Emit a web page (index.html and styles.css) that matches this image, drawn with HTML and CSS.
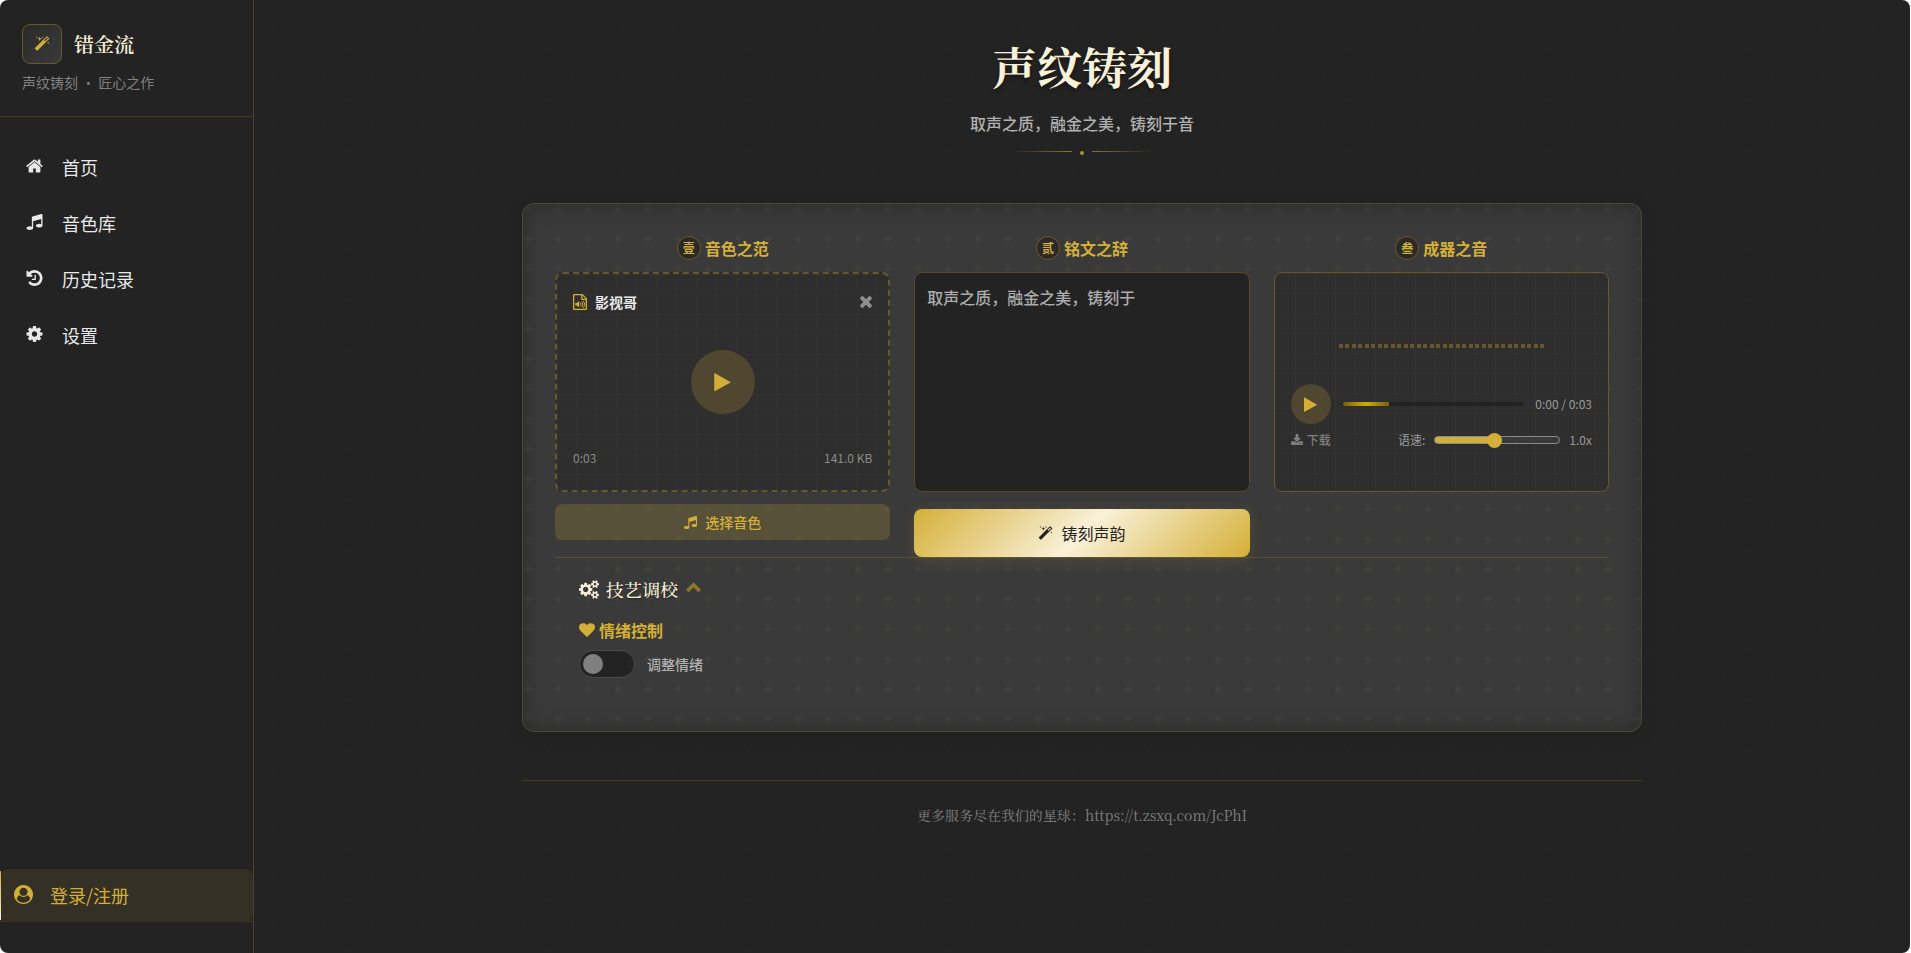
FILE: index.html
```html
<!DOCTYPE html>
<html lang="zh-CN">
<head>
<meta charset="utf-8">
<title>错金流 · 声纹铸刻</title>
<link rel="stylesheet" href="styles.css">
</head>
<body>
<svg class="sprite" aria-hidden="true">
  <symbol id="i-wand" viewBox="0 0 1664 1792"><path d="M1190 581l293-293-107-107-293 293zM1637 288q0 27-18 45L333 1619q-18 18-45 18t-45-18L45 1421q-18-18-18-45t18-45L1331 45q18-18 45-18t45 18l198 198q18 18 18 45zM286 98l98 30-98 30-30 98-30-98-98-30 98-30 30-98zM636 260l196 60-196 60-60 196-60-196-196-60 196-60 60-196zM1566 738l98 30-98 30-30 98-30-98-98-30 98-30 30-98zM926 98l98 30-98 30-30 98-30-98-98-30 98-30 30-98z"/></symbol>
  <symbol id="i-home" viewBox="0 0 1664 1536"><path d="M1408 864v480q0 26-19 45t-45 19H960v-384H704v384H320q-26 0-45-19t-19-45V864q0-1 .5-3t.5-3l575-474 575 474q1 2 1 6zm223-69l-62 74q-8 9-21 11h-3q-13 0-21-7L832 296 140 873q-12 8-24 7-13-2-21-11l-62-74q-8-10-7-23.500t11-21.500L756 151q32-26 76-26t76 26l244 204V160q0-14 9-23t23-9h192q14 0 23 9t9 23v408l219 182q10 8 11 21.500t-7 23.500z"/></symbol>
  <symbol id="i-music" viewBox="0 0 1536 1536"><path d="M1536 96v1120q0 50-34 89t-86 60.500-103.500 32-96.500 10.500-96.500-10.500-103.500-32-86-60.500-34-89 34-89 86-60.500 103.500-32 96.500-10.500q105 0 192 39V527L640 764v709q0 50-34 89t-86 60.500-103.500 32T320 1665t-96.500-10.500-103.500-32-86-60.500T0 1473t34-89 86-60.500 103.500-32T320 1281q105 0 192 39V352q0-31 19-56.500t49-35.500L1412 4q12-4 28-4 40 0 68 28t28 68z" transform="scale(1 .92)"/></symbol>
  <symbol id="i-history" viewBox="0 0 1536 1536"><path d="M1536 768q0 156-61 298t-164 245-245 164-298 61q-172 0-327-72.500T177 1259q-7-10-6.500-22.500t8.500-20.500l137-138q10-9 25-9 16 2 23 12 73 95 179 147t225 52q104 0 198.500-40.500T1130 1130t109.500-163.500T1280 768t-40.500-198.500T1130 406 966.500 296.500 768 256q-98 0-188 35.500T420 393l137 138q31 30 14 69-17 40-59 40H64q-26 0-45-19T0 576V128q0-42 40-59 39-17 69 14l130 129Q346 111 483.500 55.500T768 0q156 0 298 61t245 164 164 245 61 298zM896 480v448q0 14-9 23t-23 9H544q-14 0-23-9t-9-23v-64q0-14 9-23t23-9h224V480q0-14 9-23t23-9h64q14 0 23 9t9 23z"/></symbol>
  <symbol id="i-cog" viewBox="0 0 1536 1536"><path d="M1024 768q0-106-75-181t-181-75-181 75-75 181 75 181 181 75 181-75 75-181zm512-109v222q0 12-8 23t-20 13l-185 28q-19 54-39 91 35 50 107 138 10 12 10 25t-9 23q-27 37-99 108t-94 71q-12 0-26-9l-138-108q-44 23-91 38-16 136-29 186-7 28-36 28H657q-14 0-24.500-8.500T621 1506l-28-184q-49-16-90-37l-141 107q-10 9-25 9-14 0-25-11-126-114-165-168-7-10-7-23 0-12 8-23 15-21 51-66.500t54-70.500q-27-50-41-99L29 913q-13-2-21-12.500T0 877V655q0-12 8-23t19-13l186-28q14-46 39-92-40-57-107-138-10-12-10-24 0-10 9-23 26-36 98.500-107.500T337 135q13 0 26 10l138 107q44-23 91-38 16-136 29-186 7-28 36-28h222q14 0 24.500 8.500T915 30l28 184q49 16 90 37l142-107q9-9 24-9 13 0 25 10 129 119 165 170 7 8 7 22 0 12-8 23-15 21-51 66.500t-54 70.500q26 50 41 98l183 28q13 2 21 12.500t8 23.500z"/></symbol>
  <symbol id="i-user" viewBox="0 0 1792 1792"><path fill-rule="evenodd" d="M1523 1339q-22-155-87.500-257.500t-184.500-118.500q-67 74-159.500 115.500t-195.500 41.500-195.500-41.500-159.500-115.500q-119 16-184.500 118.500t-87.500 257.500q106 150 271 237.500t356 87.500 356-87.500 271-237.500zm-243-699q0-159-112.500-271.500t-271.500-112.500-271.500 112.500-112.500 271.500 112.500 271.500 271.500 112.500 271.500-112.500 112.500-271.500zm512 256q0 182-71 347.500t-190.500 286-285.500 191.500-349 71q-182 0-348-71t-286-191-191-286-71-348 71-348 191-286 286-191 348-71 348 71 286 191 191 286 71 348z"/></symbol>
  <symbol id="i-play" viewBox="0 0 1408 1536"><path d="M1384 809L56 1547q-23 13-39.500 3T0 1520V48q0-20 16.500-30T56 21l1328 738q23 13 23 25t-23 25z"/></symbol>
  <symbol id="i-times" viewBox="110 366 1188 1188"><path d="M1298 1322q0 40-28 68l-136 136q-28 28-68 28t-68-28l-294-294-294 294q-28 28-68 28t-68-28l-136-136q-28-28-28-68t28-68l294-294-294-294q-28-28-28-68t28-68l136-136q28-28 68-28t68 28l294 294 294-294q28-28 68-28t68 28l136 136q28 28 28 68t-28 68l-294 294 294 294q28 28 28 68z"/></symbol>
  <symbol id="i-file" viewBox="0 0 14 16"><path fill-rule="evenodd" d="M1 0h8.500L14 4.500V15a1 1 0 0 1-1 1H1a1 1 0 0 1-1-1V1a1 1 0 0 1 1-1zm.3 1.300v13.400h11.400V6H9a.8.800 0 0 1-.8-.8V1.300zm8.200.2v3.200h3.200z"/><path d="M2.300 9h1.500L6.200 7v6.400L3.800 11.500H2.300z"/><path class="line" d="M7.300 8.800q1.400 1.500 0 3M8.700 7.600q2.700 2.700 0 5.400M10 6.800q3.400 3.500 0 7"/></symbol>
  <symbol id="i-download" viewBox="0 0 1664 1536"><path d="M1280 1216q0-26-19-45t-45-19-45 19-19 45 19 45 45 19 45-19 19-45zm256 0q0-26-19-45t-45-19-45 19-19 45 19 45 45 19 45-19 19-45zm128-224v320q0 40-28 68t-68 28H96q-40 0-68-28t-28-68V992q0-40 28-68t68-28h465l135 136q58 56 136 56t136-56l136-136h464q40 0 68 28t28 68zm-325-569q17 41-14 70L877 941q-18 19-45 19t-45-19L339 493q-31-29-14-70 17-39 59-39h256V-64q0-26 19-45t45-19h256q26 0 45 19t19 45v448h256q42 0 59 39z" transform="translate(0 128)"/></symbol>
  <symbol id="i-up" viewBox="0 0 14 10"><path d="M7 0l7 7-2.500 2.500L7 5 2.500 9.500 0 7z"/></symbol>
  <symbol id="i-heart" viewBox="0 0 1792 1536"><path d="M896 1536q-26 0-44-18L228 916q-10-8-27.500-26T145 824.500 77 727 23.500 606 0 468q0-220 127-344T478 0q62 0 126.500 21.500t120 58T820 148t76 68q36-36 76-68t95.500-68.500 120-58T1314 0q224 0 351 124t127 344q0 221-229 450l-623 600q-18 18-44 18z"/></symbol>
  <symbol id="i-cogs" viewBox="0 0 1920 1792"><path d="M896 896q0-106-75-181t-181-75-181 75-75 181 75 181 181 75 181-75 75-181zm768 512q0-52-38-90t-90-38-90 38-38 90q0 53 37.500 90.500t90.500 37.500 90.500-37.500 37.500-90.500zm0-1024q0-52-38-90t-90-38-90 38-38 90q0 53 37.500 90.500T1536 512t90.500-37.500T1664 384zm-384 421v185q0 10-7 19.500t-16 10.500l-155 24q-11 35-32 76 34 48 90 115 7 11 7 20 0 12-7 19-23 30-82.500 89.500T999 1423q-11 0-21-7l-115-90q-37 19-77 31-11 108-23 155-7 24-30 24H547q-11 0-20-7.500t-10-17.500l-23-153q-34-10-75-31l-118 89q-7 7-20 7-11 0-21-8-144-133-144-160 0-9 7-19 10-14 41-53t47-61q-23-44-35-82l-152-24q-10-1-17-9.500T0 987V802q0-10 7-19.500T23 772l155-24q11-35 32-76-34-48-90-115-7-11-7-20 0-12 7-20 22-30 82-89t79-59q11 0 21 7l115 90q34-18 77-32 11-108 23-154 7-24 30-24h186q11 0 20 7.500t10 17.500l23 153q34 10 75 31l118-89q8-7 20-7 11 0 21 8 144 133 144 160 0 8-7 19-12 16-42 54t-45 60q23 48 34 82l152 23q10 2 17 10.500t7 19.500zm640 533v140q0 16-149 31-12 27-30 52 51 113 51 138 0 4-4 7-122 71-124 71-8 0-46-47t-52-68q-20 2-30 2t-30-2q-14 21-52 68t-46 47q-2 0-124-71-4-3-4-7 0-25 51-138-18-25-30-52-149-15-149-31v-140q0-16 149-31 13-29 30-52-51-113-51-138 0-4 4-7 4-2 35-20t59-34 30-16q8 0 46 46.500t52 67.500q20-2 30-2t30 2q51-71 92-112l6-2q4 0 124 70 4 3 4 7 0 25-51 138 17 23 30 52 149 15 149 31zm0-1024v140q0 16-149 31-12 27-30 52 51 113 51 138 0 4-4 7-122 71-124 71-8 0-46-47t-52-68q-20 2-30 2t-30-2q-14 21-52 68t-46 47q-2 0-124-71-4-3-4-7 0-25 51-138-18-25-30-52-149-15-149-31V314q0-16 149-31 13-29 30-52-51-113-51-138 0-4 4-7 4-2 35-20t59-34 30-16q8 0 46 46.500t52 67.500q20-2 30-2t30 2q51-71 92-112l6-2q4 0 124 70 4 3 4 7 0 25-51 138 17 23 30 52 149 15 149 31z"/></symbol>
</svg>
<div class="app">
  <aside class="sidebar">
    <div class="brand">
      <div class="brand-row">
        <span class="logo"><svg class="icon"><use href="#i-wand"/></svg></span>
        <span class="brand-name">错金流</span>
      </div>
      <p class="brand-sub">声纹铸刻 · 匠心之作</p>
    </div>
    <nav class="nav">
      <a href="#home"><svg class="icon nav-icon"><use href="#i-home"/></svg>首页</a>
      <a href="#voices"><svg class="icon nav-icon"><use href="#i-music"/></svg>音色库</a>
      <a href="#history"><svg class="icon nav-icon"><use href="#i-history"/></svg>历史记录</a>
      <a href="#settings"><svg class="icon nav-icon"><use href="#i-cog"/></svg>设置</a>
    </nav>
    <div class="account">
      <a class="login" href="#login"><svg class="icon user-icon"><use href="#i-user"/></svg>登录/注册</a>
    </div>
  </aside>
  <main class="main">
    <div class="container">
      <header class="hero">
        <h1>声纹铸刻</h1>
        <p>取声之质，融金之美，铸刻于音</p>
        <div class="divider"><i class="rule"></i><i class="dot"></i><i class="rule right"></i></div>
      </header>
      <section class="card">
        <div class="columns">
          <section class="column">
            <h2><span class="num">壹</span>音色之范</h2>
            <div class="panel voice">
              <div class="voice-head">
                <svg class="icon file-icon"><use href="#i-file"/></svg><span class="voice-name">影视哥</span>
                <button class="close" type="button" aria-label="移除"><svg class="icon"><use href="#i-times"/></svg></button>
              </div>
              <button class="play large" type="button" aria-label="播放"><svg class="icon"><use href="#i-play"/></svg></button>
              <div class="voice-meta"><span>0:03</span><span>141.0 KB</span></div>
            </div>
            <button class="choose" type="button"><svg class="icon"><use href="#i-music"/></svg>选择音色</button>
          </section>
          <section class="column">
            <h2><span class="num">贰</span><label for="script-text">铭文之辞</label></h2>
            <textarea id="script-text" class="script-text">取声之质，融金之美，铸刻于</textarea>
            <button class="forge" type="button"><svg class="icon"><use href="#i-wand"/></svg>铸刻声韵</button>
          </section>
          <section class="column">
            <h2><span class="num">叁</span>成器之音</h2>
            <div class="panel result">
              <div class="wave"></div>
              <div class="player">
                <button class="play" type="button" aria-label="播放"><svg class="icon"><use href="#i-play"/></svg></button>
                <div class="track"><div class="track-fill"></div></div>
                <span class="time">0:00 / 0:03</span>
              </div>
              <div class="tools">
                <a class="download" href="#download"><svg class="icon"><use href="#i-download"/></svg>下载</a>
                <label class="speed-label" for="speed">语速:</label>
                <input id="speed" class="speed" type="range" min="0" max="100" value="47">
                <span class="speed-value">1.0x</span>
              </div>
            </div>
          </section>
        </div>
        <section class="tuning">
          <h3><svg class="icon cogs"><use href="#i-cogs"/></svg>技艺调校<svg class="icon chevron"><use href="#i-up"/></svg></h3>
          <h4><svg class="icon"><use href="#i-heart"/></svg>情绪控制</h4>
          <label class="toggle"><input type="checkbox" role="switch">调整情绪</label>
        </section>
      </section>
      <footer class="footer">更多服务尽在我们的星球：https://t.zsxq.com/JcPhI</footer>
    </div>
  </main>
</div>
</body>
</html>
```
FILE: styles.css
```css
:root {
  --gold: #d4af37;
  --cream: #f9f1d8;
  --ink: #232323;
  --serif: "Noto Serif SC", "Noto Serif CJK SC", "Noto Serif", "Liberation Serif", serif;
}
* { box-sizing: border-box; }
html { background: #ffffff; }
body { margin: 0; color: #e8e8e8; font-family: "Noto Sans CJK SC", sans-serif; }
h1, h2, h3, h4, p { margin: 0; }
button, textarea, input { font: inherit; margin: 0; }
button { border: 0; padding: 0; cursor: pointer; }
a { color: inherit; text-decoration: none; }
.sprite { position: absolute; width: 0; height: 0; }
.icon { display: block; flex: none; fill: currentColor; overflow: visible; }
.line { fill: none; stroke: currentColor; }

.app { display: flex; min-height: 100vh; margin-right: 1px; background: var(--ink); border-radius: 8px; overflow: hidden; }

.sidebar { flex: none; width: 254px; display: flex; flex-direction: column; border-right: 1px solid #4a4031; }
.brand { padding: 24px 22px; border-bottom: 1px solid #453b1e; }
.brand-row { display: flex; align-items: center; gap: 12px; height: 40px; }
.logo { display: grid; place-items: center; width: 40px; height: 40px; border: 1px solid #66572d; border-radius: 8px; color: var(--gold); background: linear-gradient(135deg, #2a2a2a, #3a3a3a); }
.logo .icon { width: 16px; height: 16px; }
.brand-name { font: 600 20px/40px var(--serif); color: var(--cream); }
.brand-sub { margin-top: 8px; font-size: 14px; line-height: 20px; color: #808080; }
.nav { padding: 22px 0; }
.nav a { display: flex; align-items: center; gap: 19px; height: 56px; padding-left: 26px; font-size: 18px; }
.nav-icon { width: 17px; height: 16px; margin-bottom: 2px; }
.account { margin-top: auto; padding-bottom: 31px; }
.login { position: relative; display: flex; align-items: center; gap: 17px; height: 53px; padding: 0 0 2px 14px; border-radius: 8px; background: #353025; color: var(--gold); font-size: 18px; }
.account::after { content: ""; display: block; height: 1px; margin-top: -1px; background: #453b1e; }
.login::before { content: ""; position: absolute; left: 0; top: 2px; bottom: 2px; width: 1px; background: linear-gradient(var(--gold), var(--cream)); }
.user-icon { width: 19px; height: 19px; }

.main {
  flex: 1; min-width: 0; padding: 0 32px;
  background:
    radial-gradient(circle at 25px 25px, #272626 1px, transparent 2px) -6px 0 / 50px 50px,
    radial-gradient(circle at 25px 25px, #272626 1px, transparent 2px) 19px 25px / 50px 50px;
}
.container { max-width: 1120px; margin: 0 auto; }
.hero { display: flex; flex-direction: column; align-items: center; padding-top: 30px; height: 203px; }
.hero h1 { font: 700 45px/72px var(--serif); color: var(--cream); text-shadow: 0 2px 4px rgba(0, 0, 0, 0.5); }
.hero p { margin-top: 9px; font-size: 16px; font-weight: 500; line-height: 24px; color: #b0b0b0; }
.divider { display: flex; align-items: flex-start; gap: 8px; margin-top: 16px; }
.rule { width: 60px; height: 1px; background: linear-gradient(90deg, transparent, #8d7528); }
.rule.right { background: linear-gradient(270deg, transparent, #8d7528); }
.dot { width: 4px; height: 4px; border-radius: 50%; background: #ad902f; }

.card {
  padding: 32px 32px 52px; border: 1px solid #4c4837; border-radius: 12px;
  background:
    radial-gradient(ellipse 6px 2px at 5px 5px, rgba(212, 175, 55, 0.03) 50%, transparent) 0 0 / 30px 30px,
    radial-gradient(ellipse 2px 6px at 5px 5px, rgba(212, 175, 55, 0.03) 50%, transparent) 0 0 / 30px 30px,
    #3a3a3a;
  box-shadow: inset 0 0 20px rgba(0, 0, 0, 0.3), 0 4px 20px rgba(0, 0, 0, 0.08);
}
.columns { display: grid; grid-template-columns: repeat(3, minmax(0, 1fr)); gap: 24px; border-bottom: 1px solid #584e30; }
.column { display: flex; flex-direction: column; min-width: 0; }
.column h2 { display: flex; justify-content: center; align-items: center; gap: 4px; height: 24px; margin-bottom: 12px; font-size: 16px; font-weight: 700; color: var(--gold); }
.num { display: grid; place-items: center; width: 24px; height: 24px; border: 1px solid #6c592b; border-radius: 50%; background: #2b2a29; font-size: 12px; line-height: 22px; }
.panel {
  height: 220px; border: 1px solid #66572d; border-radius: 8px;
  background:
    repeating-linear-gradient(90deg, rgba(212, 175, 55, 0.03) 0 1px, transparent 1px 20px),
    repeating-linear-gradient(rgba(212, 175, 55, 0.03) 0 1px, transparent 1px 20px), #2e2e2e;
}
.voice { display: flex; flex-direction: column; justify-content: space-between; align-items: center; border: 2px dashed #66572d; padding: 16px; }
.voice-head { display: flex; align-items: center; width: 100%; height: 24px; }
.file-icon { width: 14px; height: 16px; color: var(--gold); }
.voice-name { margin-left: 8px; font-size: 14px; line-height: 20px; font-weight: 700; }
.close { margin-left: auto; background: none; color: #8f8f8f; }
.close .icon { width: 12px; height: 12px; }
.play { display: grid; place-items: center; flex: none; width: 40px; height: 40px; border-radius: 50%; background: #4f472f; color: var(--gold); }
.play .icon { width: 13px; height: 15px; }
.play.large { width: 64px; height: 64px; }
.play.large .icon { width: 17px; height: 18px; }
.voice-meta { display: flex; justify-content: space-between; width: 100%; height: 24px; font-size: 12px; line-height: 16px; color: #8b8b8b; }
.choose { display: flex; align-items: center; justify-content: center; gap: 8px; height: 36px; margin-top: 12px; border-radius: 8px; background: rgba(212, 175, 55, 0.2); color: var(--gold); font-size: 14px; font-weight: 500; }
.choose .icon { width: 13px; height: 13px; }
.script-text { display: block; width: 100%; height: 220px; padding: 12px; border: 1px solid #594a29; border-radius: 8px; outline: 0; resize: none; background: var(--ink); color: #acacac; font-size: 16px; font-weight: 500; line-height: 24px; }
.forge { display: flex; align-items: center; justify-content: center; gap: 8px; height: 48px; margin-top: 17px; border-radius: 8px; background: linear-gradient(135deg, var(--gold), #f9f1d8 50%, var(--gold)); box-shadow: 0 4px 15px rgba(212, 175, 55, 0.15); color: var(--ink); font-size: 16px; }
.forge .icon { width: 15px; height: 15px; }
.result { display: flex; flex-direction: column; padding: 0 16px; }
.wave { width: 205px; height: 4px; margin: 71px auto 36px; background: repeating-linear-gradient(90deg, #66572d 0 4px, transparent 4px 6px, #66572d 6px 10px, transparent 10px 13px); }
.player { display: flex; align-items: center; gap: 12px; }
.track { flex: 1; height: 4px; border-radius: 2px; overflow: hidden; background: #222222; }
.track-fill { width: 46px; height: 4px; background: linear-gradient(90deg, #74620f, #d0ab08, #74620f); }
.time, .tools { font-size: 12px; line-height: 16px; color: #9a9a9a; }
.tools { display: flex; align-items: center; height: 32px; }
.download { display: flex; align-items: center; gap: 4px; margin-right: auto; font-weight: 500; color: #808080; }
.download .icon { width: 12px; height: 11px; margin-bottom: 2px; }
.speed {
  appearance: none; width: 126px; height: 8px; margin: 0 9px; border: 1px solid #8b8b8b; border-radius: 4px;
  background: linear-gradient(90deg, var(--gold) 47%, #3a3a3a 47%);
}
.speed::-webkit-slider-thumb { appearance: none; width: 15px; height: 15px; border-radius: 50%; background: var(--gold); }

.tuning { padding: 17px 24px 0; }
.tuning h3 { display: flex; align-items: center; height: 28px; font: 500 18px/28px var(--serif); color: var(--cream); text-shadow: 0 1px 2px rgba(0, 0, 0, 0.5); }
.cogs { width: 20px; height: 19px; margin-right: 7px; }
.chevron { width: 15px; height: 11px; margin: 0 0 4px 8px; color: #8c762e; }
.tuning h4 { display: flex; align-items: center; gap: 4px; height: 24px; margin-top: 15px; font-size: 16px; color: var(--gold); }
.tuning h4 .icon { width: 16px; height: 14px; }
.toggle { display: flex; align-items: center; gap: 12px; margin: 8px 0 1px; font-size: 14px; font-weight: 500; color: #b0b0b0; }
.toggle input { appearance: none; display: flex; align-items: center; width: 56px; height: 28px; padding-left: 3px; border: 1px solid #4b4b4b; border-radius: 14px; background: var(--ink); }
.toggle input::before { content: ""; width: 20px; height: 20px; border-radius: 50%; background: #808080; }

.footer { margin-top: 48px; padding-top: 23px; border-top: 1px solid #453b1e; text-align: center; font: 14px/22px var(--serif); color: #808080; }
```
